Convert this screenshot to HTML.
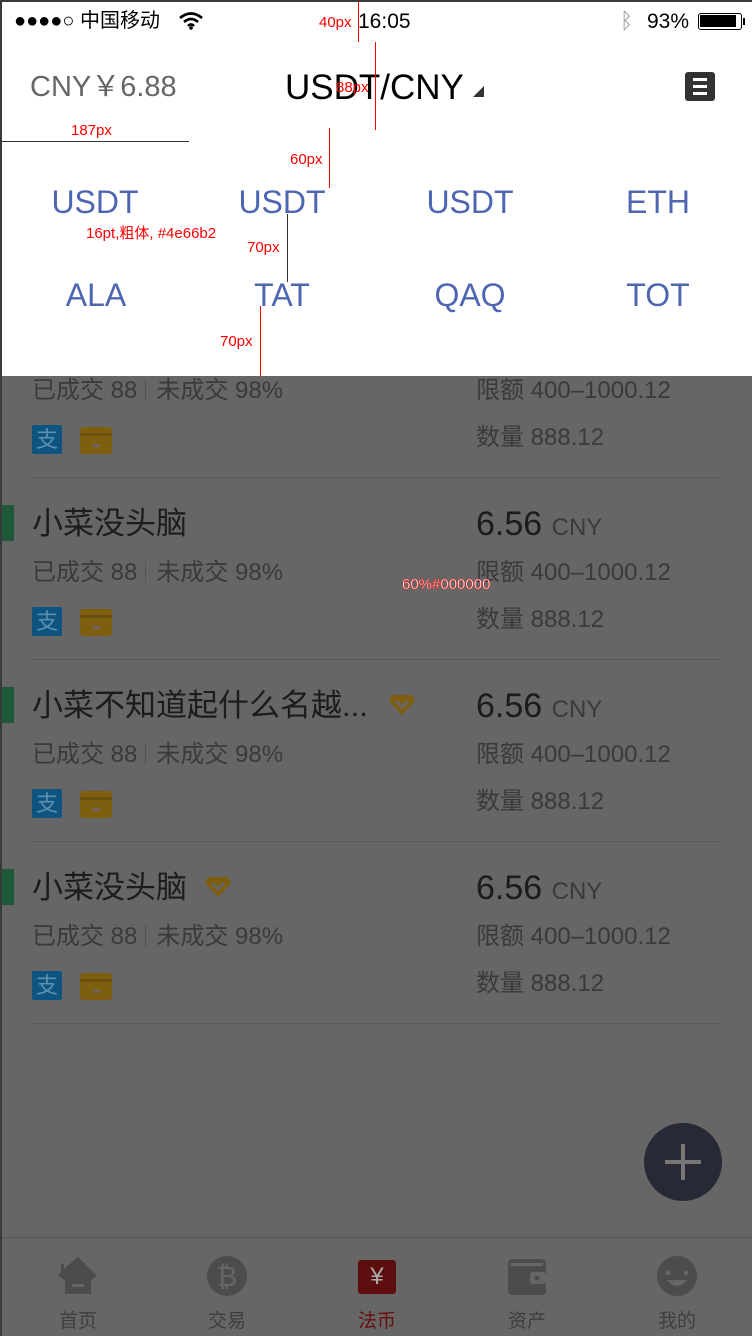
<!DOCTYPE html>
<html><head><meta charset="utf-8"><style>
*{margin:0;padding:0;box-sizing:border-box}
body{width:752px;height:1336px;position:relative;overflow:hidden;background:#666;font-family:"Liberation Sans","Noto Sans CJK SC",sans-serif}
.a{position:absolute;white-space:nowrap;line-height:1}
.t{font-size:31px;color:#1c1c1c}
.g{font-size:24px;color:#3a3a3a}
.p{font-size:34px;color:#1c1c1c}
.s{display:inline-block;width:1px;height:22px;background:#555;vertical-align:-3px;margin:0 10px 0 8px}
.div{position:absolute;left:32px;width:690px;height:1px;background:#5a5a5a}
.bar{position:absolute;left:2px;width:12px;height:36px;background:#1e5a38}
.ali{position:absolute;left:32px;width:30px;height:29px;background:#0d5580;border-radius:2px;color:#5f8fae;font-size:22px;text-align:center;line-height:29px}
.card{position:absolute;left:80px;width:32px;height:27px;background:#7e5f10;border-radius:3px}
.card:before{content:"";position:absolute;left:0;right:0;top:6px;height:3px;background:#6a5010}
.card:after{content:"";position:absolute;left:13px;top:17px;width:7px;height:3px;background:#666;border-radius:1px}
.cur{font-size:32px;color:#4e66b2;position:absolute;line-height:1;transform:translateX(-50%)}
.red{position:absolute;color:#f00;font-size:15px;line-height:1;white-space:nowrap}
.tab{position:absolute;top:1306px;font-size:19px;color:#3e3e3e;transform:translateX(-50%)}
</style></head><body>
<div style="position:absolute;left:0;top:0;width:2px;height:1336px;background:#3a3a3a"></div>
<!-- list items -->
<div class="a g" style="left:32px;top:379px">已成交 88<span class="s"></span>未成交 98%</div>
<div class="a g" style="left:476px;top:379px">限额 400–1000.12</div>
<div class="ali" style="top:425px">支</div><div class="card" style="top:427px"></div>
<div class="a g" style="left:476px;top:426px">数量 888.12</div>
<div class="div" style="top:477px"></div>

<div class="bar" style="top:505px"></div>
<div class="a t" style="left:32px;top:508px">小菜没头脑</div>
<div class="a p" style="left:476px;top:507px">6.56 <span class="g">CNY</span></div>
<div class="a g" style="left:32px;top:561px">已成交 88<span class="s"></span>未成交 98%</div>
<div class="a g" style="left:476px;top:561px">限额 400–1000.12</div>
<div class="ali" style="top:607px">支</div><div class="card" style="top:609px"></div>
<div class="a g" style="left:476px;top:608px">数量 888.12</div>
<div class="div" style="top:659px"></div>

<div class="bar" style="top:687px"></div>
<div class="a t" style="left:32px;top:690px">小菜不知道起什么名越...</div>
<svg class="a" style="left:388px;top:693px" width="28" height="24" viewBox="0 0 28 24"><path d="M4 2h20l3 6-13 14L1 8z" fill="#7e5f10"/><path d="M8 8l6 6 6-6" stroke="#666" stroke-width="3" fill="none"/></svg>
<div class="a p" style="left:476px;top:689px">6.56 <span class="g">CNY</span></div>
<div class="a g" style="left:32px;top:743px">已成交 88<span class="s"></span>未成交 98%</div>
<div class="a g" style="left:476px;top:743px">限额 400–1000.12</div>
<div class="ali" style="top:789px">支</div><div class="card" style="top:791px"></div>
<div class="a g" style="left:476px;top:790px">数量 888.12</div>
<div class="div" style="top:841px"></div>

<div class="bar" style="top:869px"></div>
<div class="a t" style="left:32px;top:872px">小菜没头脑</div>
<svg class="a" style="left:204px;top:875px" width="28" height="24" viewBox="0 0 28 24"><path d="M4 2h20l3 6-13 14L1 8z" fill="#7e5f10"/><path d="M8 8l6 6 6-6" stroke="#666" stroke-width="3" fill="none"/></svg>
<div class="a p" style="left:476px;top:871px">6.56 <span class="g">CNY</span></div>
<div class="a g" style="left:32px;top:925px">已成交 88<span class="s"></span>未成交 98%</div>
<div class="a g" style="left:476px;top:925px">限额 400–1000.12</div>
<div class="ali" style="top:971px">支</div><div class="card" style="top:973px"></div>
<div class="a g" style="left:476px;top:972px">数量 888.12</div>
<div class="div" style="top:1023px"></div>

<!-- FAB -->
<div style="position:absolute;left:644px;top:1123px;width:78px;height:78px;border-radius:50%;background:#272a35"></div>
<div style="position:absolute;left:681px;top:1144px;width:4px;height:36px;background:#777"></div>
<div style="position:absolute;left:665px;top:1160px;width:36px;height:4px;background:#777"></div>

<!-- tab bar -->
<div style="position:absolute;left:2px;top:1237px;width:750px;height:1px;background:#555"></div>
<svg class="a" style="left:57px;top:1256px" width="42" height="40" viewBox="0 0 42 40"><path d="M21 1L40 20 34 24V38H8V24L1 20 4 16V8H7V13z" fill="#4c4c4c"/><rect x="15" y="28" width="12" height="3" fill="#666"/></svg>
<svg class="a" style="left:206px;top:1256px" width="42" height="40" viewBox="0 0 42 40"><ellipse cx="21" cy="20" rx="20" ry="20" fill="#4c4c4c"/><text x="21" y="30" font-size="28" text-anchor="middle" fill="#666" font-family="Liberation Sans">₿</text></svg>
<div style="position:absolute;left:358px;top:1260px;width:38px;height:34px;background:#5e0e0e;border-radius:3px;color:#aaa;font-size:24px;text-align:center;line-height:34px">¥</div>
<svg class="a" style="left:508px;top:1259px" width="38" height="36" viewBox="0 0 38 36"><rect x="0" y="0" width="38" height="36" rx="4" fill="#4c4c4c"/><rect x="3" y="4" width="32" height="3" fill="#666"/><rect x="22" y="13" width="16" height="12" rx="3" fill="#666"/><circle cx="29" cy="19" r="2.5" fill="#4c4c4c"/></svg>
<svg class="a" style="left:656px;top:1256px" width="42" height="40" viewBox="0 0 42 40"><ellipse cx="21" cy="20" rx="20" ry="20" fill="#4c4c4c"/><circle cx="12" cy="17" r="2.5" fill="#666"/><circle cx="30" cy="17" r="2.5" fill="#666"/><path d="M11 24Q21 36 31 24z" fill="#666"/></svg>
<div class="tab" style="left:78px">首页</div>
<div class="tab" style="left:227px">交易</div>
<div class="tab" style="left:377px;color:#6a0f0f">法币</div>
<div class="tab" style="left:527px">资产</div>
<div class="tab" style="left:677px">我的</div>

<!-- white top panel -->
<div style="position:absolute;left:2px;top:2px;width:750px;height:374px;background:#fff"></div>
<div style="position:absolute;left:0;top:0;width:752px;height:2px;background:#3a3a3a"></div>
<!-- status bar -->
<div class="a" style="left:14px;top:11px;font-size:20px;color:#000">●●●●○ 中国移动</div>
<svg class="a" style="left:179px;top:12px" width="24" height="18" viewBox="0 0 24 18"><path d="M1 6Q12-3 23 6M5 10Q12 4 19 10M9 14Q12 11 15 14" stroke="#000" stroke-width="2.6" fill="none"/><circle cx="12" cy="16" r="1.8"/></svg>
<div class="a" style="left:358px;top:11px;font-size:21px;color:#000">16:05</div>
<div class="a" style="left:620px;top:10px;font-size:22px;color:#999">ᛒ</div>
<div class="a" style="left:647px;top:11px;font-size:21px;color:#000">93%</div>
<div style="position:absolute;left:698px;top:13px;width:44px;height:17px;border:1.5px solid #000;border-radius:3px;padding:1px"><div style="width:36px;height:12px;background:#000"></div></div>
<div style="position:absolute;left:743px;top:18px;width:2px;height:7px;background:#000"></div>
<!-- nav -->
<div class="a" style="left:30px;top:73px;font-size:29px;color:#666">CNY￥6.88</div>
<div class="a" style="left:285px;top:70px;font-size:35px;color:#000">USDT/CNY</div>
<div style="position:absolute;left:473px;top:86px;width:0;height:0;border-left:11px solid transparent;border-bottom:11px solid #333"></div>
<div style="position:absolute;left:685px;top:72px;width:30px;height:29px;background:#333;border-radius:3px"></div>
<div style="position:absolute;left:693px;top:78px;width:14px;height:3px;background:#fff"></div>
<div style="position:absolute;left:693px;top:85px;width:14px;height:3px;background:#fff"></div>
<div style="position:absolute;left:693px;top:92px;width:14px;height:3px;background:#fff"></div>
<!-- currencies -->
<div class="cur" style="left:95px;top:186px">USDT</div>
<div class="cur" style="left:282px;top:186px">USDT</div>
<div class="cur" style="left:470px;top:186px">USDT</div>
<div class="cur" style="left:658px;top:186px">ETH</div>
<div class="cur" style="left:96px;top:279px">ALA</div>
<div class="cur" style="left:282px;top:279px">TAT</div>
<div class="cur" style="left:470px;top:279px">QAQ</div>
<div class="cur" style="left:658px;top:279px">TOT</div>
<!-- annotations -->
<div style="position:absolute;left:358px;top:2px;width:1px;height:40px;background:#f00"></div>
<div class="red" style="left:319px;top:15px">40px</div>
<div style="position:absolute;left:375px;top:42px;width:1px;height:88px;background:#f00"></div>
<div class="red" style="left:336px;top:80px">88px</div>
<div style="position:absolute;left:2px;top:141px;width:187px;height:1px;background:#333"></div>
<div class="red" style="left:71px;top:123px">187px</div>
<div style="position:absolute;left:329px;top:128px;width:1px;height:60px;background:#f00"></div>
<div class="red" style="left:290px;top:152px">60px</div>
<div class="red" style="left:86px;top:226px">16pt,粗体, #4e66b2</div>
<div style="position:absolute;left:287px;top:214px;width:1px;height:68px;background:#333"></div>
<div class="red" style="left:247px;top:240px">70px</div>
<div style="position:absolute;left:260px;top:306px;width:1px;height:70px;background:#f00"></div>
<div class="red" style="left:220px;top:334px">70px</div>
<div class="red" style="left:402px;top:577px;color:#fff;-webkit-text-stroke:0.4px #f00">60%#000000</div>
</body></html>
